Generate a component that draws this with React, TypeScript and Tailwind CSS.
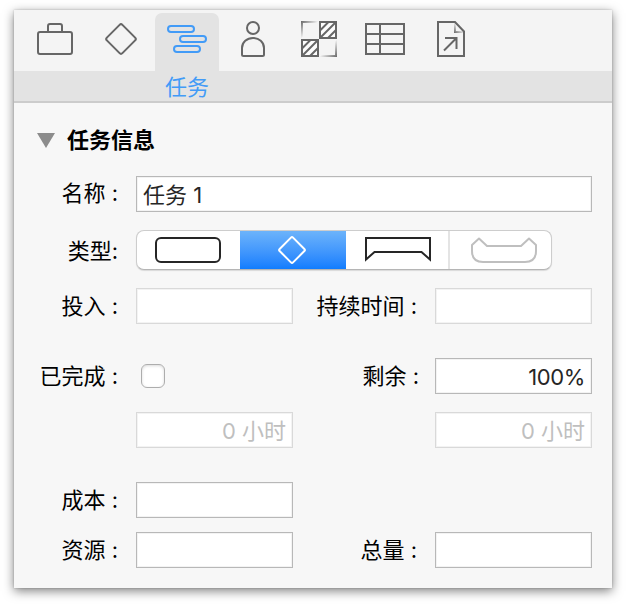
import clsx from "clsx";
import type { ReactNode } from "react";

function BriefcaseIcon() {
  return (
    <>
      <rect x="15" y="19" width="34" height="22" rx="2" />
      <path d="M25 19V13a2 2 0 0 1 2-2H37a2 2 0 0 1 2 2V19" />
    </>
  );
}

function MilestoneIcon() {
  return <rect x="21" y="15" width="22" height="22" rx="2" transform="rotate(45 32 26)" />;
}

function TaskIcon() {
  return (
    <>
      <rect x="13" y="13" width="26" height="6" rx="3" />
      <rect x="25" y="23" width="26" height="6" rx="3" />
      <rect x="19" y="33" width="26" height="6" rx="3" />
    </>
  );
}

function PersonIcon() {
  return (
    <>
      <circle cx="32" cy="15" r="6" />
      <path d="M21 41.5V35C21 29 26 25 32 25S43 29 43 35V41.5Q43 43 41.5 43H22.5Q21 43 21 41.5Z" />
    </>
  );
}

function PatternIcon() {
  return (
    <>
      <defs>
        <linearGradient id="fade-tl" gradientUnits="userSpaceOnUse" x1="14" y1="8" x2="24" y2="18">
          <stop offset="0" stopColor="#666" />
          <stop offset="0.9" stopColor="#666" stopOpacity="0" />
        </linearGradient>
        <linearGradient id="fade-br" gradientUnits="userSpaceOnUse" x1="50" y1="44" x2="40" y2="34">
          <stop offset="0" stopColor="#666" />
          <stop offset="0.9" stopColor="#666" stopOpacity="0" />
        </linearGradient>
      </defs>
      <path d="M15 26V9H32" stroke="url(#fade-tl)" />
      <path d="M32 43H49V26" stroke="url(#fade-br)" />
      <rect x="33" y="9" width="16" height="16" fill="#fcfcfc" />
      <path d="M33 17.5L41.5 9M33 25L49 9M41 25L49 17" />
      <rect x="15" y="27" width="16" height="16" fill="#fcfcfc" />
      <path d="M15 35.5L23.5 27M15 43L31 27M23 43L31 35" />
    </>
  );
}

function TableIcon() {
  return (
    <>
      <rect x="13" y="11" width="38" height="30" />
      <path d="M27 11V41M13 21H51M13 31H51" />
    </>
  );
}

function DocumentIcon() {
  return (
    <>
      <defs>
        <linearGradient id="fade-fold" gradientUnits="userSpaceOnUse" x1="35" y1="20" x2="41" y2="14">
          <stop offset="0" stopColor="#666" />
          <stop offset="0.9" stopColor="#666" stopOpacity="0.05" />
        </linearGradient>
      </defs>
      <path d="M19 9H36L45 18.5V43H19Z" />
      <path d="M36 9V19H45" stroke="url(#fade-fold)" />
      <path d="M26 25H37.5V36M25 37.5L37 25.5" />
    </>
  );
}

const tabs: { id: string; icon: ReactNode; active?: boolean }[] = [
  { id: "project", icon: <BriefcaseIcon /> },
  { id: "milestone", icon: <MilestoneIcon /> },
  { id: "task", icon: <TaskIcon />, active: true },
  { id: "resource", icon: <PersonIcon /> },
  { id: "style", icon: <PatternIcon /> },
  { id: "table", icon: <TableIcon /> },
  { id: "attachment", icon: <DocumentIcon /> },
];

function Toolbar() {
  return (
    <div className="flex h-[61px] gap-0.5 bg-[#f4f4f4] pt-[3px] pl-[9px]">
      {tabs.map((tab) => (
        <button
          key={tab.id}
          aria-label={tab.id}
          className={clsx("h-[58px] w-16 rounded-t-[7px]", tab.active && "bg-[#e3e3e3]")}
        >
          <svg
            width="64"
            height="58"
            viewBox="0 0 64 58"
            fill="none"
            strokeWidth="2"
            className={tab.active ? "stroke-[#429bf7]" : "stroke-[#666]"}
          >
            {tab.icon}
          </svg>
        </button>
      ))}
    </div>
  );
}

function Label({ className, children }: { className: string; children: ReactNode }) {
  return (
    <span className={clsx("shrink-0 pr-px text-right whitespace-nowrap text-black", className)}>
      {children}
    </span>
  );
}

function Field({
  value,
  disabled,
  className = "w-[157px] justify-end",
}: {
  value?: string;
  disabled?: boolean;
  className?: string;
}) {
  return (
    <div
      className={clsx(
        "flex h-9 shrink-0 items-center border bg-white px-1.5 pt-0.5 shadow-[inset_0_0_0_1px_#f3f3f3]",
        disabled ? "border-[#d9d9d9] text-[#bfbfbf]" : "border-[#b8b8b8] text-[#262626]",
        className
      )}
    >
      {value}
    </div>
  );
}

function TypeSelector() {
  return (
    <div className="flex h-10 w-[416px] overflow-hidden rounded-[8px] border border-[#cdcdcd] border-b-[#b5b5b5] bg-white shadow-[0_1px_1px_rgba(0,0,0,0.12)]">
      <button className="w-[103px] pl-[17px]">
        <svg width="68" height="28" viewBox="0 0 68 28" fill="none" stroke="#262626" strokeWidth="2">
          <rect x="2" y="2" width="64" height="24" rx="5" />
        </svg>
      </button>
      <button className="-my-px w-[106px] border-y border-t-[#64acf6] border-b-[#0968e0] bg-linear-to-b from-[#6cb3fa] to-[#0f7dfe] pl-[18px]">
        <svg width="68" height="28" viewBox="0 0 68 28" fill="none" stroke="white" strokeWidth="2">
          <rect x="24.5" y="4.5" width="19" height="19" rx="1.5" transform="rotate(45 34 14)" />
        </svg>
      </button>
      <button className="w-[104px] border-r-2 border-[#e4e4e4] pl-[18px]">
        <svg width="68" height="28" viewBox="0 0 68 28" fill="none" stroke="#262626" strokeWidth="2">
          <path d="M2 23.5V2H66V23.5L57.5 16H10.5Z" />
        </svg>
      </button>
      <button className="flex-1 pl-5">
        <svg
          width="68"
          height="28"
          viewBox="0 0 68 28"
          fill="none"
          stroke="#bfbfbf"
          strokeWidth="2"
          strokeLinejoin="round"
        >
          <path d="M2 9L9 2.5L17 10H51L59 2.5L66 9V15Q66 26 55 26H13Q2 26 2 15Z" />
        </svg>
      </button>
    </div>
  );
}

export default function App() {
  return (
    <div className="h-[604px] w-[626px] overflow-hidden bg-white pt-2.5 pl-3.5 font-['Inter','Noto_Sans_CJK_SC',sans-serif] text-[22px] leading-8">
      <div className="h-[578px] w-[598px] bg-[#f7f7f7] shadow-[0_3px_10px_rgba(0,0,0,0.5),0_0_2px_rgba(0,0,0,0.2)]">
        <Toolbar />
        <div className="h-8 border-b-2 border-[#cccccc] bg-[#e3e3e3] pl-[9px]">
          <div className="ml-[132px] w-16 text-center text-[#429bf7]">任务</div>
        </div>

        <div className="flex flex-col">
          {/* Section header */}
          <div className="mt-[21px] flex h-8 items-center pl-[23px]">
            <svg width="18" height="15" viewBox="0 0 18 15" fill="#8c8c8c">
              <path d="M0 0H18L9 15Z" />
            </svg>
            <h2 className="ml-3 font-bold text-black">任务信息</h2>
          </div>

          <div className="mt-5 flex h-9 items-center">
            <Label className="w-[105px] pb-0.5">名称 :</Label>
            <Field value="任务 1" className="ml-[17px] w-[456px]" />
          </div>

          <div className="mt-[18px] flex h-10 items-center">
            <Label className="mr-[17px] w-[105px] pt-0.5">类型:</Label>
            <TypeSelector />
          </div>

          <div className="mt-[18px] flex h-9 items-center">
            <Label className="w-[105px]">投入 :</Label>
            <Field disabled className="ml-[17px] w-[157px]" />
            <Label className="mr-[17px] w-[125px]">持续时间 :</Label>
            <Field disabled />
          </div>

          <div className="mt-[34px] flex h-9 items-center">
            <Label className="w-[105px]">已完成 :</Label>
            <div className="ml-[22px] size-6 rounded-[6px] border border-[#adadad] bg-white shadow-[inset_0_1px_3px_rgba(0,0,0,0.15)]" />
            <Label className="mr-[15px] w-[255px]">剩余 :</Label>
            <Field value="100%" className="w-[157px] justify-end tracking-[-0.4px]" />
          </div>

          <div className="mt-[18px] flex gap-[142px] pl-[122px]">
            <Field value="0 小时" disabled />
            <Field value="0 小时" disabled />
          </div>

          <div className="mt-[34px] flex h-9 items-center">
            <Label className="mr-[17px] w-[105px]">成本 :</Label>
            <Field />
          </div>

          <div className="mt-3.5 flex h-9 items-center">
            <Label className="mr-[17px] w-[105px]">资源 :</Label>
            <Field />
            <Label className="mr-[17px] w-[125px]">总量 :</Label>
            <Field />
          </div>
        </div>
      </div>
    </div>
  );
}
